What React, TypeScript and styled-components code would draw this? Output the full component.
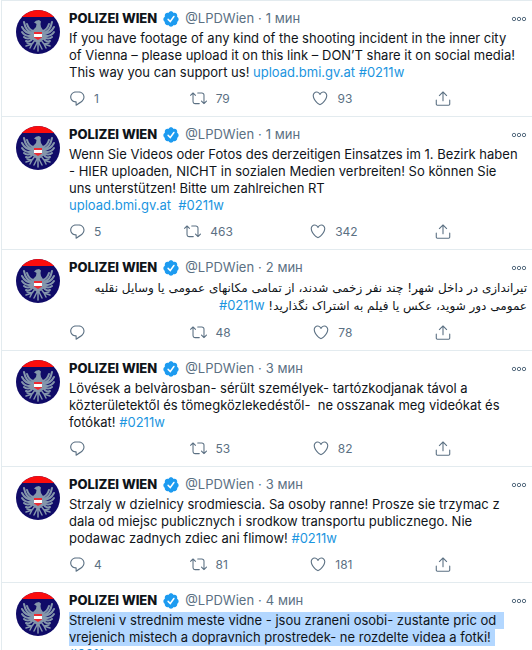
import React from "react";
import styled, { createGlobalStyle } from "styled-components";

const GlobalStyle = createGlobalStyle`
  * { box-sizing: border-box; }
  body {
    margin: 0;
    background: #fff;
    color: #0f1419;
    font-family: Inter, "Liberation Sans", sans-serif;
    font-size: 13px;
    line-height: 17px;
  }
`;

const Feed = styled.main`
  height: 100vh;
  overflow: hidden;
  margin-left: 1px;
  border-left: 1px solid #e3ebef;
  border-top: 1px solid #e3ebef;
`;

const Tweet = styled.article`
  display: flex;
  gap: 9px;
  padding: 9px 5px 9px 14px;
  border-bottom: 1px solid #e3ebef;
`;

const AvatarLink = styled.a`
  flex: none;
  width: 44px;
  height: 44px;
  svg { display: block; }
`;

const Content = styled.div`
  flex: 1;
  min-width: 0;
`;

const Header = styled.header`
  display: flex;
  align-items: center;
  height: 17px;
  margin-bottom: 3px;
  color: #5b7083;
  white-space: nowrap;
`;

const Name = styled.a`
  color: #0f1419;
  font-weight: 800;
  text-decoration: none;
`;

const Badge = styled.svg`
  flex: none;
  width: 16px;
  height: 16px;
  margin: 0 6px;
`;

const Handle = styled.a`
  color: inherit;
  text-decoration: none;
  margin-right: 4px;
`;

const Time = styled.time`
  margin-left: 4px;
`;

const IconButton = styled.button`
  display: flex;
  padding: 0;
  border: 0;
  background: none;
  color: #5b7083;
  font: inherit;
  cursor: pointer;
`;

const MoreButton = styled(IconButton)`
  margin-left: auto;
`;

const Body = styled.p<{ $rtl?: boolean }>`
  margin: 0;
  padding-top: ${(p) => (p.$rtl ? 1 : 0)}px;
  white-space: pre-wrap;
  font-family: ${(p) => (p.$rtl ? '"DejaVu Sans", sans-serif' : "inherit")};
  font-size: ${(p) => (p.$rtl ? 12 : 13)}px;
`;

const Link = styled.a`
  color: #1b95e0;
  text-decoration: none;
  font-family: Inter, "Liberation Sans", sans-serif;
  font-size: 13px;
  line-height: 16px;
`;

const Selected = styled.mark<{ $tail: number }>`
  display: block;
  width: fit-content;
  padding-right: ${(p) => p.$tail}px;
  background: #b3d7ff;
  color: inherit;
`;

const Actions = styled.div`
  display: flex;
  justify-content: space-between;
  max-width: 382px;
  margin-top: 9px;
`;

const Action = styled(IconButton)<{ $counted?: boolean }>`
  align-items: center;
  gap: 9px;
  min-width: ${(p) => (p.$counted ? 38 : 16)}px;
  height: 17px;
  font-size: 12px;
  svg { flex: none; }
`;

const Eagle = () => (
  <svg width="44" height="44" viewBox="0 0 44 44" aria-hidden="true">
    <defs>
      <clipPath id="disc"><circle cx="22" cy="22" r="22" /></clipPath>
    </defs>
    <g clipPath="url(#disc)">
      <path fill="#100b68" d="M0 0h44v44H0z" />
      <path fill="#fb0d0d" d="M0 0h44v7H0z" />
      <g fill="none" stroke="#8496ab" strokeWidth="2" strokeLinecap="round">
        <path d="M17 23C12 22 9 18 8 12M17 24C11 24 8 21 6 17M17 25C12 27 8 25 6 22M17 27C13 29 10 29 8 27M17 28C15 31 12 32 10 31M17 21C14 20 12 17 11 14" />
        <path d="M27 23C32 22 35 18 36 12M27 24C33 24 36 21 38 17M27 25C32 27 36 25 38 22M27 27C31 29 34 29 36 27M27 28C29 31 32 32 34 31M27 21C30 20 32 17 33 14" />
        <path strokeWidth="1.5" d="M19 30L16 34L10 36M16 34L14 38M16 34L11 33M25 30L28 34L34 36M28 34L30 38M28 34L33 33M22 30V41M21 33L18 39M23 33L26 39" />
      </g>
      <path fill="#8496ab" d="M18 12.500l2-1.800 3-.7 2 1.500-.5 2.500.5 3 2 3 1 9-6 5-6-5 1-9 3-3 .5-3-1.500-1z" />
      <path fill="#ee2a32" d="M18 22h8v5.500L22 30l-4-2.500z" />
      <path fill="#fff" d="M18 24h8v3h-8z" />
    </g>
  </svg>
);

const Verified = () => (
  <Badge viewBox="1 1 22 22" role="img" aria-label="Verified">
    <path fill="#1d9bf0" d="M22.5 12.5c0-1.58-.875-2.95-2.148-3.6.154-.435.238-.905.238-1.4 0-2.21-1.71-3.998-3.818-3.998-.47 0-.92.084-1.336.25C14.818 2.415 13.51 1.5 12 1.5s-2.816.917-3.437 2.25c-.415-.165-.866-.25-1.336-.25-2.11 0-3.818 1.79-3.818 4 0 .494.083.964.237 1.4-1.272.65-2.147 2.018-2.147 3.6 0 1.495.782 2.798 1.942 3.486-.02.17-.032.34-.032.514 0 2.21 1.708 4 3.818 4 .47 0 .92-.086 1.335-.25.62 1.334 1.926 2.25 3.437 2.25 1.512 0 2.818-.916 3.437-2.25.415.163.865.248 1.336.248 2.11 0 3.818-1.79 3.818-4 0-.174-.012-.344-.033-.513 1.158-.687 1.943-1.99 1.943-3.484z" />
    <path fill="none" stroke="#fff" strokeWidth="2" strokeLinecap="round" d="M8 12.5l3 3 5-7" />
  </Badge>
);

const ReplyIcon = () => (
  <svg width="16" height="17" viewBox="0.5 1 22 22" fill="currentColor" aria-hidden="true">
    <path d="M14.046 2.242l-4.148-.01h-.002c-4.374 0-7.8 3.427-7.8 7.802 0 4.098 3.186 7.206 7.465 7.37v3.828c0 .108.044.286.12.403.142.225.384.347.632.347.138 0 .277-.038.402-.118.264-.168 6.473-4.14 8.088-5.506 1.902-1.61 3.04-3.97 3.043-6.312v-.017c-.006-4.367-3.43-7.787-7.8-7.788zm3.787 12.972c-1.134.96-4.862 3.405-6.772 4.643V16.67c0-.414-.335-.75-.75-.75h-.396c-3.66 0-6.318-2.476-6.318-5.886 0-3.534 2.768-6.302 6.3-6.302l4.147.01h.002c3.532 0 6.3 2.766 6.302 6.296-.003 1.91-.942 3.844-2.514 5.176z" />
  </svg>
);

const RetweetIcon = () => (
  <svg width="17" height="17" viewBox="0 1 24 23" fill="currentColor" aria-hidden="true">
    <path d="M23.77 15.67c-.292-.293-.767-.293-1.06 0l-2.22 2.22V7.65c0-2.068-1.683-3.75-3.75-3.75h-5.85c-.414 0-.75.336-.75.75s.336.75.75.75h5.85c1.24 0 2.25 1.01 2.25 2.25v10.24l-2.22-2.22c-.293-.293-.768-.293-1.06 0s-.294.768 0 1.06l3.5 3.5c.145.147.337.22.53.22s.383-.072.53-.22l3.5-3.5c.294-.292.294-.767 0-1.06zm-10.66 3.28H7.26c-1.24 0-2.25-1.01-2.25-2.25V6.46l2.22 2.22c.148.147.34.22.532.22s.384-.073.53-.22c.293-.293.293-.768 0-1.06l-3.5-3.5c-.293-.294-.768-.294-1.06 0l-3.5 3.5c-.294.292-.294.767 0 1.06s.767.293 1.06 0l2.22-2.22V16.7c0 2.068 1.683 3.75 3.75 3.75h5.85c.414 0 .75-.336.75-.75s-.337-.75-.75-.75z" />
  </svg>
);

const HeartIcon = () => (
  <svg width="16" height="17" viewBox="1 1.5 22 22" fill="currentColor" aria-hidden="true">
    <path d="M12 21.638h-.014C9.403 21.59 1.95 14.856 1.95 8.478c0-3.064 2.525-5.754 5.403-5.754 2.29 0 3.83 1.58 4.646 2.73.814-1.148 2.354-2.73 4.645-2.73 2.88 0 5.404 2.69 5.404 5.755 0 6.376-7.454 13.11-10.037 13.157H12zM7.354 4.225c-2.08 0-3.903 1.988-3.903 4.255 0 5.74 7.034 11.596 8.55 11.658 1.518-.062 8.55-5.917 8.55-11.658 0-2.267-1.823-4.255-3.903-4.255-2.528 0-3.94 2.936-3.952 2.965-.23.562-1.156.562-1.387 0-.014-.03-1.425-2.965-3.954-2.965z" />
  </svg>
);

const ShareIcon = () => (
  <svg width="16" height="17" viewBox="1 1 22 22" fill="currentColor" aria-hidden="true">
    <path d="M17.53 7.47l-5-5c-.293-.293-.768-.293-1.06 0l-5 5c-.294.293-.294.768 0 1.06s.767.294 1.06 0l3.72-3.72V15c0 .414.336.75.75.75s.75-.336.75-.75V4.81l3.72 3.72c.146.147.338.22.53.22s.384-.072.53-.22c.293-.293.293-.767 0-1.06z" />
    <path d="M19.708 21.944H4.292C3.028 21.944 2 20.916 2 19.652V14c0-.414.336-.75.75-.75s.75.336.75.75v5.652c0 .437.355.792.792.792h15.416c.437 0 .792-.355.792-.792V14c0-.414.336-.75.75-.75s.75.336.75.75v5.652c0 1.264-1.028 2.292-2.292 2.292z" />
  </svg>
);

const MoreIcon = () => (
  <svg width="16" height="6" viewBox="0 0 16 6" fill="none" stroke="currentColor" aria-hidden="true">
    <circle cx="3" cy="3" r="1.7" />
    <circle cx="8" cy="3" r="1.7" />
    <circle cx="13" cy="3" r="1.7" />
  </svg>
);

const Tag = () => <Link href="#0211w" dir="ltr">#0211w</Link>;
const Upload = () => <Link href="#upload">upload.bmi.gv.at</Link>;

interface TweetData {
  time: string;
  text: React.ReactNode;
  rtl?: boolean;
  replies?: number;
  retweets?: number;
  likes?: number;
}

const tweets: TweetData[] = [
  {
    time: "1 мин",
    text: <>{"If you have footage of any kind of the shooting incident in the inner city\nof Vienna – please upload it on this link – DON’T share it on social media!\nThis way you can support us! "}<Upload /> <Tag /></>,
    replies: 1, retweets: 79, likes: 93,
  },
  {
    time: "1 мин",
    text: <>{"Wenn Sie Videos oder Fotos des derzeitigen Einsatzes im 1. Bezirk haben\n- HIER uploaden, NICHT in sozialen Medien verbreiten! So können Sie\nuns unterstützen! Bitte um zahlreichen RT\n"}<Upload />{"  "}<Tag /></>,
    replies: 5, retweets: 463, likes: 342,
  },
  {
    time: "2 мин",
    rtl: true,
    text: <>{"تیراندازی در داخل شهر! چند نفر زخمی شدند، از تمامی مکانهای عمومی یا وسایل نقلیه\nعمومی دور شوید، عکس یا فیلم به اشتراک نگذارید! "}<Tag /></>,
    retweets: 48, likes: 78,
  },
  {
    time: "3 мин",
    text: <>{"Lövések a belvàrosban- sérült személyek- tartózkodjanak távol a\nközterületektől és tömegközlekedéstől-  ne osszanak meg videókat és\nfotókat! "}<Tag /></>,
    retweets: 53, likes: 82,
  },
  {
    time: "3 мин",
    text: <>{"Strzaly w dzielnicy srodmiescia. Sa osoby ranne! Prosze sie trzymac z\ndala od miejsc publicznych i srodkow transportu publicznego. Nie\npodawac zadnych zdiec ani flimow! "}<Tag /></>,
    replies: 4, retweets: 81, likes: 181,
  },
  {
    time: "4 мин",
    text: <>
      <Selected $tail={8}>Streleni v strednim meste vidne - jsou zraneni osobi- zustante pric od</Selected>
      <Selected $tail={4}>vrejenich mistech a dopravnich prostredek- ne rozdelte videa a fotki!</Selected>
      <Tag />
    </>,
  },
];

export default function App() {
  return (
    <>
      <GlobalStyle />
      <Feed>
        {tweets.map((t, i) => (
          <Tweet key={i}>
            <AvatarLink href="#LPDWien" aria-label="POLIZEI WIEN"><Eagle /></AvatarLink>
            <Content>
              <Header>
                <Name href="#LPDWien">POLIZEI WIEN</Name>
                <Verified />
                <Handle href="#LPDWien">@LPDWien</Handle>·<Time>{t.time}</Time>
                <MoreButton aria-label="More"><MoreIcon /></MoreButton>
              </Header>
              <Body $rtl={t.rtl} dir={t.rtl ? "rtl" : "ltr"}>{t.text}</Body>
              <Actions>
                <Action $counted aria-label="Reply"><ReplyIcon />{t.replies}</Action>
                <Action $counted aria-label="Retweet"><RetweetIcon />{t.retweets}</Action>
                <Action $counted aria-label="Like"><HeartIcon />{t.likes}</Action>
                <Action aria-label="Share"><ShareIcon /></Action>
              </Actions>
            </Content>
          </Tweet>
        ))}
      </Feed>
    </>
  );
}
